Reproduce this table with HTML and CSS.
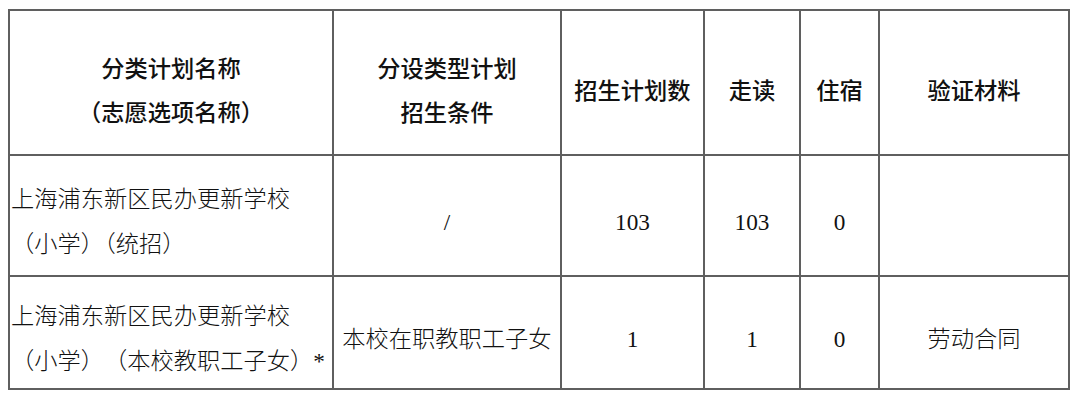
FILE: index.html
```html
<!DOCTYPE html>
<html lang="zh-CN">
<head>
<meta charset="utf-8">
<title>招生计划</title>
<link rel="stylesheet" href="styles.css">
</head>
<body>
<div class="plan-table" role="table">
  <div class="cell head" role="columnheader"><span>分类计划名称<br>（志愿选项名称）</span></div>
  <div class="cell head" role="columnheader"><span>分设类型计划<br>招生条件</span></div>
  <div class="cell head" role="columnheader"><span>招生计划数</span></div>
  <div class="cell head" role="columnheader"><span>走读</span></div>
  <div class="cell head" role="columnheader"><span>住宿</span></div>
  <div class="cell head" role="columnheader"><span>验证材料</span></div>

  <div class="cell name name-tight" role="cell"><span>上海浦东新区民办更新学校<br>（小学）（统招）</span></div>
  <div class="cell num" role="cell"><span>/</span></div>
  <div class="cell num" role="cell"><span>103</span></div>
  <div class="cell num" role="cell"><span>103</span></div>
  <div class="cell num" role="cell"><span>0</span></div>
  <div class="cell text" role="cell"><span></span></div>

  <div class="cell name" role="cell"><span>上海浦东新区民办更新学校<br>（小学）（本校教职工子女）*</span></div>
  <div class="cell text" role="cell"><span>本校在职教职工子女</span></div>
  <div class="cell num" role="cell"><span>1</span></div>
  <div class="cell num" role="cell"><span>1</span></div>
  <div class="cell num" role="cell"><span>0</span></div>
  <div class="cell text" role="cell"><span>劳动合同</span></div>
</div>
</body>
</html>
```

FILE: styles.css
```css
html, body {
  margin: 0;
  padding: 0;
  background: #ffffff;
}

body {
  padding: 9px 8px 0 8px;
}

.plan-table {
  display: grid;
  grid-template-columns: 324px 228px 143px 96px 79px 190px;
  grid-template-rows: 145px 121px 113px;
  width: 1062px;
  box-sizing: border-box;
  border-left: 2px solid #5f5f5f;
  border-top: 2px solid #5f5f5f;
  color: #111111;
}

.cell {
  box-sizing: border-box;
  border-right: 2px solid #5f5f5f;
  border-bottom: 2px solid #5f5f5f;
  display: flex;
  align-items: center;
  justify-content: center;
  text-align: center;
  padding-top: 12px;
  font-size: 23.25px;
  line-height: 44px;
  white-space: nowrap;
  text-spacing-trim: space-all;
  font-feature-settings: "halt" 0, "chws" 0;
}

.head {
  font-family: "Noto Sans CJK SC", sans-serif;
  font-weight: 500;
}

.name {
  justify-content: flex-start;
  text-align: left;
  padding-left: 1px;
  line-height: 45px;
  font-family: "Liberation Serif", "Noto Sans CJK SC", serif;
  font-weight: 300;
}

.name-tight {
  text-spacing-trim: normal;
  font-feature-settings: normal;
}

.text {
  font-family: "Liberation Serif", "Noto Sans CJK SC", serif;
  font-weight: 300;
}

.num {
  font-family: "Liberation Serif", serif;
  font-weight: 400;
}
```
